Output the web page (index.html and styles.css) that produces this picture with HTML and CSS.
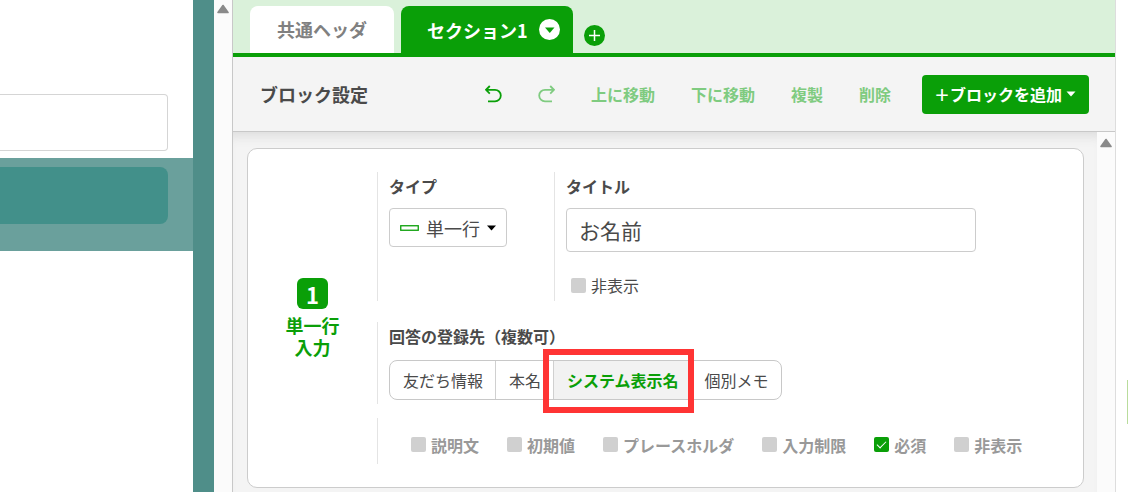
FILE: index.html
```html
<!DOCTYPE html>
<html lang="ja">
<head>
    <meta charset="UTF-8">
    <meta name="viewport" content="width=device-width, initial-scale=1.0">
    <title>ブロック設定</title>
    <link rel="stylesheet" href="styles.css">
</head>
<body>
    <aside class="preview">
        <input type="text" class="preview-input" aria-label="プレビュー入力欄">
        <div class="preview-footer">
            <button type="button" class="preview-submit" aria-label="送信"></button>
        </div>
    </aside>

    <div class="scrollbar">
        <svg width="12" height="10" viewBox="0 0 12 10"><path d="M6 1.5 L11 8.5 H1 Z" fill="#8a8a8a" stroke="#8a8a8a" stroke-width="1.6" stroke-linejoin="round"/></svg>
    </div>

    <main class="editor">
        <nav class="tabs">
            <button type="button" class="tab">共通ヘッダ</button>
            <button type="button" class="tab tab-active">
                セクション1
                <svg width="21" height="21" viewBox="0 0 21 21"><circle cx="10.5" cy="10.5" r="10.5" fill="#fff"/><path d="M6 8.5 H15.5 L10.75 14 Z" fill="#0a9f08"/></svg>
            </button>
            <button type="button" class="tab-add" aria-label="セクションを追加">
                <svg width="21" height="21" viewBox="0 0 21 21"><circle cx="10.5" cy="10.5" r="10.5" fill="#0a9f08"/><path d="M10.5 5 V16 M5 10.5 H16" stroke="#fff" stroke-width="1.5"/></svg>
            </button>
        </nav>

        <div class="toolbar">
            <h1>ブロック設定</h1>
            <div class="actions">
                <button type="button" class="action action-on" aria-label="元に戻す">
                    <svg width="17" height="18" viewBox="0 0 17 18"><path d="M4.8 1 L1 4.8 L4.8 8.6 M1 4.8 H10 A5.8 5.8 0 0 1 10 16.4 H3" fill="none" stroke="currentColor" stroke-width="1.8"/></svg>
                </button>
                <button type="button" class="action" aria-label="やり直す">
                    <svg width="17" height="18" viewBox="0 0 17 18"><path d="M12.2 1 L16 4.8 L12.2 8.6 M16 4.8 H7 A5.8 5.8 0 0 0 7 16.4 H14" fill="none" stroke="currentColor" stroke-width="1.8"/></svg>
                </button>
                <button type="button" class="action">上に移動</button>
                <button type="button" class="action">下に移動</button>
                <button type="button" class="action">複製</button>
                <button type="button" class="action">削除</button>
            </div>
            <button type="button" class="add-block">
                ＋ブロックを追加
                <svg width="10" height="6" viewBox="0 0 10 6"><path d="M0.5 0.5 H9.5 L5 5.5 Z" fill="#fff"/></svg>
            </button>
        </div>

        <div class="workspace">
            <div class="canvas">
                <section class="block">
                    <div class="block-head">
                        <span class="block-number">1</span>
                        <span>単一行<br>入力</span>
                    </div>
                    <div class="block-body">
                        <div class="row row-main">
                            <div class="field field-type">
                                <label for="blockType">タイプ</label>
                                <div class="select-box">
                                    <svg width="19" height="6" viewBox="0 0 19 6"><rect x="0.75" y="0.75" width="17.5" height="4.5" fill="#fff" stroke="#0a9f08" stroke-width="1.3"/></svg>
                                    <select id="blockType">
                                        <option>単一行</option>
                                    </select>
                                    <svg width="9" height="6" viewBox="0 0 9 6"><path d="M0 0.5 H9 L4.5 5.5 Z" fill="#000"/></svg>
                                </div>
                            </div>
                            <div class="field field-title">
                                <label for="blockTitle">タイトル</label>
                                <input type="text" id="blockTitle" value="お名前">
                                <label class="check check-title"><input type="checkbox">非表示</label>
                            </div>
                        </div>

                        <div class="row field row-target">
                            <span class="field-label">回答の登録先（複数可）</span>
                            <div class="segments">
                                <button type="button" class="segment">友だち情報</button>
                                <button type="button" class="segment">本名</button>
                                <button type="button" class="segment segment-active">システム表示名</button>
                                <button type="button" class="segment">個別メモ</button>
                            </div>
                        </div>

                        <div class="row row-options">
                            <label class="check"><input type="checkbox">説明文</label>
                            <label class="check"><input type="checkbox">初期値</label>
                            <label class="check"><input type="checkbox">プレースホルダ</label>
                            <label class="check"><input type="checkbox">入力制限</label>
                            <label class="check"><input type="checkbox" checked>必須</label>
                            <label class="check"><input type="checkbox">非表示</label>
                        </div>
                    </div>
                </section>
            </div>
            <div class="scrollbar">
                <svg width="12" height="10" viewBox="0 0 12 10"><path d="M6 1.5 L11 8.5 H1 Z" fill="#8a8a8a" stroke="#8a8a8a" stroke-width="1.6" stroke-linejoin="round"/></svg>
            </div>
        </div>
    </main>

    <div class="side">
        <div class="side-handle"></div>
    </div>
</body>
</html>
```
FILE: styles.css
```css
* {
    box-sizing: border-box;
}

body {
    display: flex;
    height: 100vh;
    margin: 0;
    overflow: hidden;
    background: #fff;
    color: #4a4a4a;
    font-family: "Noto Sans CJK JP", sans-serif;
    font-size: 16px;
    line-height: 24px;
}

button, input, select {
    font: inherit;
    color: inherit;
    margin: 0;
}

button {
    padding: 0;
    border: none;
    background: none;
    white-space: nowrap;
    cursor: pointer;
}

svg {
    display: block;
    flex: none;
}

/* 左側のプレビュー */
.preview {
    flex: none;
    width: 214px;
    padding-top: 94px;
    border-right: 21px solid #4f8e89;
}

.preview-input {
    display: block;
    width: calc(100% - 25px);
    height: 57px;
    border: 1px solid #d5d5d5;
    border-left: none;
    border-radius: 0 4px 4px 0;
    background: #fff;
}

.preview-footer {
    margin-top: 7px;
    padding: 9px 25px 27px 0;
    background: #6aa09c;
}

.preview-submit {
    display: block;
    width: 100%;
    height: 57px;
    border-radius: 0 8px 8px 0;
    background: #42908a;
}

.scrollbar {
    display: flex;
    flex: none;
    align-items: flex-start;
    justify-content: center;
    width: 18px;
    padding-top: 4px;
    background: #fbfbfb;
}

/* エディタ */
.editor {
    display: flex;
    flex: 1;
    flex-direction: column;
    min-width: 0;
    border-left: 1px solid #c8c8c8;
    border-right: 1px solid #ddd;
    background: #f4f4f4;
}

.tabs {
    display: flex;
    flex: none;
    gap: 7px;
    padding: 6px 17px 0;
    border-bottom: 4px solid #0a9f08;
    background: #daf1da;
}

.tab {
    display: flex;
    align-items: center;
    gap: 11px;
    height: 47px;
    padding: 0 27px 2px;
    border-radius: 8px 8px 0 0;
    background: #fff;
    color: #808080;
    font-size: 18px;
    font-weight: bold;
}

.tab-active {
    padding: 0 13px 0 26px;
    background: #0a9f08;
    color: #fff;
}

.tab-add {
    align-self: flex-end;
    margin: 0 4px 7px;
}

.toolbar {
    display: flex;
    flex: none;
    align-items: center;
    gap: 31px;
    height: 75px;
    padding: 0 26px 0 27px;
    border-bottom: 1px solid #c8c8c8;
}

.toolbar h1 {
    margin: 0;
    font-size: 18px;
    font-weight: bold;
    white-space: nowrap;
}

.actions {
    display: flex;
    align-items: center;
    gap: 36px;
    margin-left: auto;
}

.action {
    color: #7fcb80;
    font-weight: bold;
}

.action-on {
    color: #0a9f08;
}

.add-block {
    display: flex;
    align-items: center;
    gap: 4px;
    height: 39px;
    padding: 0 13px 0 12px;
    border-radius: 4px;
    background: #0a9f08;
    color: #fff;
    font-weight: bold;
}

.workspace {
    display: flex;
    flex: 1;
    min-height: 0;
}

.workspace .scrollbar {
    padding-top: 6px;
}

.canvas {
    flex: 1;
    min-width: 0;
    padding: 16px 13px 4px 14px;
    box-shadow: inset 0 12px 12px -8px #dcdcdc;
}

.block {
    display: flex;
    border: 1px solid #ccc;
    border-radius: 10px;
    background: #fff;
}

.block-head {
    display: flex;
    flex: none;
    flex-direction: column;
    align-items: center;
    justify-content: center;
    gap: 5px;
    width: 129px;
    color: #0a9f08;
    font-size: 18px;
    font-weight: bold;
    line-height: 22px;
    text-align: center;
}

.block-number {
    width: 31px;
    height: 31px;
    border-radius: 6px;
    background: #0a9f08;
    color: #fff;
    font-size: 22px;
    line-height: 32px;
}

.block-body {
    flex: 1;
    min-width: 0;
    padding: 23px 0;
}

.row {
    border-left: 1px solid #e4e4e4;
}

.row-main {
    display: flex;
    height: 129px;
}

.field {
    padding: 2px 0 0 11px;
}

.field > label,
.field-label {
    display: block;
    font-weight: bold;
}

.field-type {
    width: 176px;
}

.field-title {
    flex: 1;
    border-left: 1px solid #e4e4e4;
}

.select-box {
    display: inline-flex;
    align-items: center;
    gap: 7px;
    height: 39px;
    margin-top: 10px;
    padding: 0 10px;
    border: 1px solid #ccc;
    border-radius: 4px;
    font-size: 18px;
}

.select-box select {
    appearance: none;
    padding: 0;
    border: none;
    background: none;
}

.field-title input[type="text"] {
    display: block;
    width: 100%;
    max-width: 410px;
    height: 44px;
    margin-top: 10px;
    padding: 0 12px;
    border: 1px solid #ccc;
    border-radius: 4px;
    background: #fff;
    font-size: 21px;
}

.check {
    display: flex;
    align-items: center;
    gap: 5px;
    white-space: nowrap;
}

.check input {
    appearance: none;
    display: grid;
    place-items: center;
    flex: none;
    width: 15px;
    height: 15px;
    border-radius: 2px;
    background: #d0d0d0;
}

.check input:checked {
    background: #0a9f08;
}

.check input:checked::after {
    content: "";
    width: 8px;
    height: 4px;
    margin-bottom: 2px;
    border: solid #fff;
    border-width: 0 0 1px 1px;
    transform: rotate(-45deg);
}

.field > .check-title {
    display: flex;
    margin: 21px 0 0 5px;
    font-weight: normal;
}

.row-target {
    height: 82px;
    margin-top: 21px;
}

.segments {
    display: inline-flex;
    height: 40px;
    margin-top: 12px;
    border: 1px solid #c8c8c8;
    border-radius: 8px;
}

.segment {
    padding: 0 12px 0 13px;
}

.segment + .segment {
    border-left: 1px solid #d0d0d0;
}

.segment-active {
    position: relative;
    background: #f2f2f2;
    color: #0a9f08;
    font-weight: bold;
}

/* 選択箇所を示す赤枠 */
.segment-active::after {
    content: "";
    position: absolute;
    inset: -12px -3px -14px -11px;
    border: 6px solid #ff3434;
}

.row-options {
    display: flex;
    align-items: center;
    gap: 28px;
    height: 46px;
    margin-top: 14px;
    padding: 7px 0 0 33px;
    color: #999;
    font-weight: bold;
}

.side {
    display: flex;
    flex: none;
    justify-content: flex-end;
    width: 12px;
    padding-top: 380px;
}

.side-handle {
    width: 1px;
    height: 44px;
    background: #b9dc9c;
}
```
